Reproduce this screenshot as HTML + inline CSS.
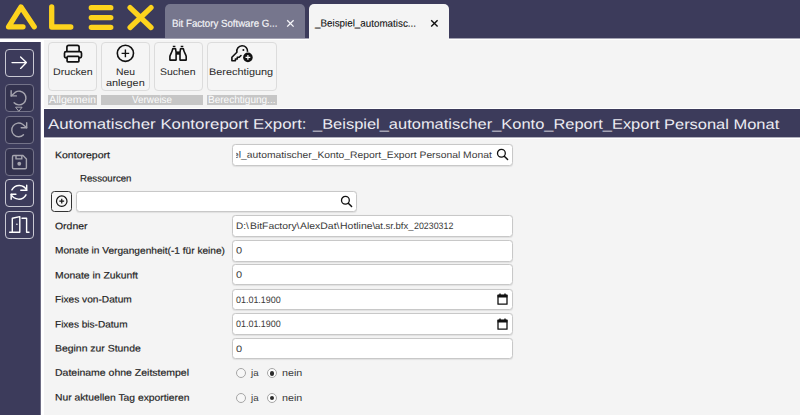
<!DOCTYPE html>
<html lang="de">
<head>
<meta charset="utf-8">
<title>ALEX - Automatischer Kontoreport Export</title>
<style>
*{box-sizing:border-box;margin:0;padding:0}
html,body{width:800px;height:415px;overflow:hidden;background:#fff}
body{position:relative;font-family:"Liberation Sans",sans-serif;color:#222;font-size:10px}
.abs{position:absolute}
.t{position:absolute;white-space:nowrap;line-height:1;transform-origin:0 0}
#hdr{left:0;top:0;width:800px;height:38px;background:#3c3b5b}
#hdr2{left:0;top:38px;width:800px;height:1px;background:#a5a4b4}
#side{left:0;top:42px;width:40px;height:373px;background:#3c3b5b}
#main{left:44px;top:40px;width:756px;height:375px;background:#f4f4f4}
.tab{position:absolute;top:4px;height:34px;border-radius:5px 5px 0 0}
#tab1{left:165px;width:140px;background:#76768d}
#tab2{left:309px;width:140px;background:#f4f4f4}
#tab2b{left:309px;top:38px;width:140px;height:2px;background:#f4f4f4}
.sb{position:absolute;left:5px;width:29px;height:28px;border:1px solid #c9c9d3;border-radius:4px}
.sb.dis{border-color:#747389;background:#33324e}
.sb svg{position:absolute;left:-1px;top:-1px}
.tb{position:absolute;top:42px;height:48.5px;border:1px solid #dcdcdc;border-radius:4px;background:#f5f5f5}
.grp{position:absolute;top:95px;height:9.5px;background:#c6c6c6;overflow:hidden}
.grp span{transform-origin:0 0;position:absolute;top:-0.8px;color:#fcfcfc;font-size:10.4px;line-height:12px;white-space:nowrap}
#title{left:44px;top:108px;width:756px;height:31px;background:#b1b1bd;border-top:1px solid #fff;border-bottom:1px solid #fff}
#title i{position:absolute;left:0;top:0;width:100%;height:28px;background:#3c3b5b}
#side2{left:40px;top:42px;width:1px;height:373px;background:#6d6c84}
.lbl{transform-origin:0 0;position:absolute;left:55px;white-space:nowrap;line-height:12px;font-size:9.4px;color:#1f1f1f;-webkit-text-stroke:0.18px #1f1f1f}
.inp{position:absolute;left:232px;width:280.6px;height:21.5px;background:#fff;border:1px solid #c8c8c8;border-radius:3.5px;overflow:hidden;box-shadow:0 0.5px 1px rgba(0,0,0,0.08)}
.inp span{transform-origin:0 0;position:absolute;left:3px;top:4.2px;white-space:nowrap;line-height:12px;font-size:9.4px;color:#3a3a3a}
.rad{position:absolute;width:10px;height:10px;border-radius:50%;border:1px solid #a6a6a6;background:#f7f7f7}
.rad.on{background:#fdfdfd}
.rad.on::after{content:"";position:absolute;left:1.75px;top:1.75px;width:4.5px;height:4.5px;border-radius:50%;background:#2b2b2b}
.rl{transform-origin:0 0;position:absolute;white-space:nowrap;line-height:12px;font-size:9.4px;color:#383838}
/*FIT*/
#t_tab1{transform:translateY(0.80px) rotate(0.03deg) scaleX(0.9586)}
#t_tab2{transform:translateY(0.60px) rotate(0.03deg) scaleX(0.9731)}
#t_b1{transform:translateY(0.00px) rotate(0.03deg) scaleX(1.1194)}
#t_b2a{transform:translateY(0.00px) rotate(0.03deg) scaleX(1.0896)}
#t_b2b{transform:translateY(0.00px) rotate(0.03deg) scaleX(1.1445)}
#t_b3{transform:translateY(0.00px) rotate(0.03deg) scaleX(1.1013)}
#t_b4{transform:translateY(0.00px) rotate(0.03deg) scaleX(1.1450)}
#t_g1{transform:translateY(0.00px) rotate(0.03deg) scaleX(1.0298)}
#t_g2{transform:translateY(0.00px) rotate(0.03deg) scaleX(0.9485)}
#t_g3{transform:translateY(0.00px) rotate(0.03deg) scaleX(0.9656)}
#t_title{transform:translateY(0.70px) rotate(0.03deg) scaleX(1.2036)}
#t_title2{transform:translateY(0.70px) rotate(0.03deg) scaleX(1.1746)}
#l1{transform:translateY(0.30px) rotate(0.03deg) scaleX(1.1224)}
#l2{transform:translateY(-0.50px) rotate(0.03deg) scaleX(1.0294)}
#l3{transform:translateY(0.30px) rotate(0.03deg) scaleX(1.1135)}
#l4{transform:translateY(0.60px) rotate(0.03deg) scaleX(1.0801)}
#l5{transform:translateY(0.40px) rotate(0.03deg) scaleX(1.1060)}
#l6{transform:translateY(0.50px) rotate(0.03deg) scaleX(1.0831)}
#l7{transform:translateY(0.40px) rotate(0.03deg) scaleX(1.0704)}
#l8{transform:translateY(-0.50px) rotate(0.03deg) scaleX(1.1116)}
#l9{transform:translateY(-0.20px) rotate(0.03deg) scaleX(1.1180)}
#l10{transform:translateY(-0.40px) rotate(0.03deg) scaleX(1.0998)}
#i1{transform:translateY(0.00px) rotate(0.03deg) scaleX(1.1008)}
#i3a{transform:translateY(0.00px) rotate(0.03deg) scaleX(1.0639)}
#i3b{transform:translateY(0.00px) rotate(0.03deg) scaleX(1.1046)}
#i3c{transform:translateY(0.00px) rotate(0.03deg) scaleX(1.1146)}
#i3d{transform:translateY(0.00px) rotate(0.03deg) scaleX(1.1165)}
#i3e{transform:translateY(0.00px) rotate(0.03deg) scaleX(1.0106)}
#i3f{transform:translateY(0.00px) rotate(0.03deg) scaleX(0.9420)}
#i4{transform:translateY(-0.40px) rotate(0.03deg) scaleX(1.1689)}
#i5{transform:translateY(-0.20px) rotate(0.03deg) scaleX(1.1689)}
#i6{transform:translateY(0.00px) rotate(0.03deg) scaleX(0.9537)}
#i7{transform:translateY(0.00px) rotate(0.03deg) scaleX(0.9537)}
#i8{transform:translateY(0.00px) rotate(0.03deg) scaleX(1.1689)}
#r1{transform:translateY(0.00px) rotate(0.03deg) scaleX(1.0278)}
#r2{transform:translateY(0.00px) rotate(0.03deg) scaleX(1.1419)}
#r3{transform:translateY(0.00px) rotate(0.03deg) scaleX(1.0278)}
#r4{transform:translateY(0.00px) rotate(0.03deg) scaleX(1.1419)}
/*ENDFIT*/
</style>
</head>
<body>
<div id="hdr" class="abs">
  <svg class="abs" style="left:0;top:0" width="165" height="38" viewBox="0 0 165 38">
    <g fill="none" stroke="#fdd31d" stroke-width="5.3" stroke-linecap="round" stroke-linejoin="round">
      <path d="M23 26.8 L8.5 26.8 L21 7 L34.2 26.8"/>
      <path d="M51.7 7 L51.7 27 L70.8 27"/>
      <path d="M91.3 7.7 H110.8 M91.3 17.6 H110.8 M91.3 27.3 H110.8"/>
      <path d="M130.1 7.6 L151 27.5 M151 7.6 L130.1 27.5"/>
    </g>
  </svg>
  <div id="tab1" class="tab"></div>
  <div id="tab2" class="tab"></div>
  <span class="t" id="t_tab1" style="left:171.5px;top:18px;font-size:10.1px;color:#f6f6fa;-webkit-text-stroke:0.15px #f6f6fa">Bit Factory Software G...</span>
  <span class="t" id="t_tab2" style="left:315px;top:18px;font-size:10.1px;color:#111;-webkit-text-stroke:0.1px #111">_Beispiel_automatisc...</span>
  <svg class="abs" style="left:286px;top:19px" width="9" height="9" viewBox="0 0 9 9"><path d="M1.2 1.2 L7.6 7.6 M7.6 1.2 L1.2 7.6" stroke="#f6f6fa" stroke-width="1.3" fill="none"/></svg>
  <svg class="abs" style="left:430px;top:19px" width="9" height="9" viewBox="0 0 9 9"><path d="M1.2 1.2 L7.6 7.6 M7.6 1.2 L1.2 7.6" stroke="#111" stroke-width="1.4" fill="none"/></svg>
</div>

<div id="hdr2" class="abs"></div>
<div id="tab2b" class="abs"></div>
<div id="side" class="abs"></div>
<div id="side2" class="abs"></div>
<div id="main" class="abs"></div>

<!-- sidebar buttons -->
<div class="sb" style="top:49px">
  <svg width="29" height="28" viewBox="0 0 29 28"><path d="M7 13.6 H21.3 M15.6 7.9 L21.4 13.6 L15.6 19.4" fill="none" stroke="#fff" stroke-width="1.35" stroke-linecap="round" stroke-linejoin="round"/></svg>
</div>
<div class="sb dis" style="top:84px">
  <svg width="29" height="28" viewBox="0 0 29 28" style="overflow:visible"><g fill="none" stroke="#a6a5af" stroke-width="1.4" stroke-linecap="round" stroke-linejoin="round"><path d="M6.15 6.7 V11.9 H11.4"/><path d="M9.1 18.7 A6.85 6.85 0 1 0 10.1 8.4 L6.15 11.9"/><path d="M11 23.2 H17.1 L14.05 27 Z" stroke-width="1"/></g></svg>
</div>
<div class="sb dis" style="top:116px">
  <svg width="29" height="28" viewBox="0 0 29 28"><g fill="none" stroke="#a6a5af" stroke-width="1.4" stroke-linecap="round" stroke-linejoin="round"><path d="M21.7 6.7 V11.8 H16.2"/><path d="M18.5 18.7 A6.85 6.85 0 1 1 17.6 8.3 L21.7 11.8"/></g></svg>
</div>
<div class="sb dis" style="top:147.5px">
  <svg width="29" height="28" viewBox="0 0 29 28"><g fill="none" stroke="#a6a5af" stroke-width="1.4" stroke-linejoin="round"><path d="M8.7 7.5 H18 L21.4 10.9 V19.5 Q21.4 20.7 20.2 20.7 H8.7 Q7.5 20.7 7.5 19.5 V8.7 Q7.5 7.5 8.7 7.5 Z"/><path d="M11 7.5 V10.9 H16.8 V7.5"/><circle cx="14.25" cy="15.75" r="1.9" fill="#a6a5af" stroke="none"/></g></svg>
</div>
<div class="sb" style="top:179px">
  <svg width="29" height="28" viewBox="0 0 29 28"><g fill="none" stroke="#fff" stroke-width="1.45" stroke-linecap="round" stroke-linejoin="round"><path d="M6.9 10.9 A8.3 8.3 0 0 1 21.7 11.3"/><path d="M21.7 6.3 V11.3 H15.8"/><path d="M21 15.8 A8.3 8.3 0 0 1 6.15 15.3"/><path d="M6.15 20.2 V15.3 H10.9"/></g></svg>
</div>
<div class="sb" style="top:210.5px">
  <svg width="29" height="28" viewBox="0 0 29 28"><g fill="none" stroke="#fff" stroke-width="1.4" stroke-linecap="round" stroke-linejoin="round"><path d="M4.6 21.2 H14.8 V5.6 L7.3 7.3 V21.2"/><path d="M17 7.3 H21.6 V21.2 H24"/><circle cx="11.9" cy="13.2" r="0.8" fill="#fff" stroke="none"/></g></svg>
</div>

<!-- toolbar -->
<div class="tb" style="left:48px;width:49px"></div>
<div class="tb" style="left:101px;width:49px"></div>
<div class="tb" style="left:154px;width:49px"></div>
<div class="tb" style="left:207px;width:70px"></div>

<svg class="abs" style="left:62px;top:43px" width="22" height="21" viewBox="0 0 22 21"><g fill="none" stroke="#111" stroke-width="1.7" stroke-linejoin="round"><path d="M4.9 8.4 V4.2 Q4.9 2.4 6.7 2.4 H15.3 Q17.1 2.4 17.1 4.2 V8.4"/><rect x="2.5" y="8.6" width="17" height="6.2" rx="1.6"/><rect x="5.1" y="13.4" width="11.8" height="5.4" rx="0.8" fill="#f5f5f5"/></g></svg>
<svg class="abs" style="left:115px;top:43px" width="22" height="21" viewBox="0 0 22 21"><g fill="none" stroke="#111"><circle cx="10.4" cy="10.3" r="8.1" stroke-width="1.6"/><path d="M6.6 10.4 H14.2 M10.4 6.6 V14.2" stroke-width="1.4"/></g></svg>
<svg class="abs" style="left:167px;top:43px" width="22" height="21" viewBox="0 0 22 21"><g fill="none" stroke="#111" stroke-width="1.6" stroke-linejoin="round"><path d="M5.7 5.8 H8.6 L9.1 9.5 V17.1 H2.9 V13.6 C2.9 12 5.2 9.5 5.7 5.8 Z"/><path d="M16.4 5.8 H13.5 L13 9.5 V17.1 H19.2 V13.6 C19.2 12 16.9 9.5 16.4 5.8 Z"/><path d="M5.8 3.6 H8.4 M13.7 3.6 H16.3" stroke-width="1.5"/></g><rect x="9.1" y="8.4" width="3.9" height="3.3" fill="#111"/></svg>
<svg class="abs" style="left:229px;top:43px" width="26" height="21" viewBox="0 0 26 21"><g fill="none" stroke="#111" stroke-width="1.6" stroke-linejoin="round" stroke-linecap="round"><path d="M18.55 8.8 A5.4 5.4 0 1 0 7.9 9.2 L2.9 14.2 V17.7 H6.4 V16 H8.3 V14.3 H10.2 L12 12.5"/></g><circle cx="14.4" cy="6.9" r="1" fill="#111"/><circle cx="18.9" cy="14.4" r="5.7" fill="#f5f5f5"/><circle cx="18.9" cy="14.4" r="4.8" fill="#111"/><path d="M16.5 14.4 H21.3 M18.9 12 V16.8" stroke="#fff" stroke-width="1.2"/></svg>

<span class="t" id="t_b1" style="left:52.9px;top:66.6px;font-size:9.5px;color:#2a2a2a">Drucken</span>
<span class="t" id="t_b2a" style="left:116px;top:66.6px;font-size:9.5px;color:#2a2a2a">Neu</span>
<span class="t" id="t_b2b" style="left:105.8px;top:77.6px;font-size:9.5px;color:#2a2a2a">anlegen</span>
<span class="t" id="t_b3" style="left:159.8px;top:66.6px;font-size:9.5px;color:#2a2a2a">Suchen</span>
<span class="t" id="t_b4" style="left:209.2px;top:66.6px;font-size:9.5px;color:#2a2a2a">Berechtigung</span>

<div class="grp" style="left:48.3px;width:48.9px"><span id="t_g1" style="left:0.5px">Allgemein</span></div>
<div class="grp" style="left:101px;width:101.6px"><span id="t_g2" style="left:31px">Verweise</span></div>
<div class="grp" style="left:206.8px;width:70px"><span id="t_g3" style="left:1px">Berechtigung...</span></div>

<div id="title" class="abs"><i></i></div>
<span class="t" id="t_title" style="left:48px;top:116.4px;font-size:14px;color:#ececf2">Automatischer Kontoreport Export:</span>
<span class="t" id="t_title2" style="left:312.5px;top:116.4px;font-size:14px;color:#ececf2">_Beispiel_automatischer_Konto_Report_Export Personal Monat</span>

<!-- form -->
<span class="lbl" id="l1" style="top:149.1px">Kontoreport</span>
<span class="lbl" id="l2" style="top:172.7px;left:79.5px">Ressourcen</span>
<span class="lbl" id="l3" style="top:219.6px">Ordner</span>
<span class="lbl" id="l4" style="top:244.1px">Monate in Vergangenheit(-1 für keine)</span>
<span class="lbl" id="l5" style="top:268.6px">Monate in Zukunft</span>
<span class="lbl" id="l6" style="top:293.2px">Fixes von-Datum</span>
<span class="lbl" id="l7" style="top:317.6px">Fixes bis-Datum</span>
<span class="lbl" id="l8" style="top:342.85px">Beginn zur Stunde</span>
<span class="lbl" id="l9" style="top:367.1px">Dateiname ohne Zeitstempel</span>
<span class="lbl" id="l10" style="top:391.6px">Nur aktuellen Tag exportieren</span>

<div class="inp" style="top:144px"><div class="abs" style="left:2.6px;top:0;right:0;bottom:0;overflow:hidden"><span id="i1" style="left:auto;right:19.6px;transform-origin:100% 0">_Beispiel_automatischer_Konto_Report_Export Personal Monat</span></div></div>
<svg class="abs" style="left:496px;top:148.2px" width="13" height="13" viewBox="0 0 13 13"><circle cx="5.4" cy="5.2" r="3.9" fill="none" stroke="#111" stroke-width="1.3"/><path d="M8.3 8.2 L11.6 11.5" stroke="#111" stroke-width="1.5" stroke-linecap="round"/></svg>

<div class="abs" style="left:51px;top:190.5px;width:21px;height:21px;border:1px solid #333;border-radius:3.5px;background:#f7f7f7"></div>
<svg class="abs" style="left:51px;top:190.5px" width="21" height="21" viewBox="0 0 21 21"><circle cx="10.75" cy="10.2" r="5.25" fill="none" stroke="#111" stroke-width="1.2"/><path d="M8.35 10.2 H13.15 M10.75 7.8 V12.6" stroke="#111" stroke-width="1.2"/></svg>
<div class="inp" style="left:76px;top:190.5px;width:281px;height:21.3px"></div>
<svg class="abs" style="left:339.5px;top:194.8px" width="13" height="13" viewBox="0 0 13 13"><circle cx="5.4" cy="5.2" r="3.9" fill="none" stroke="#111" stroke-width="1.3"/><path d="M8.3 8.2 L11.6 11.5" stroke="#111" stroke-width="1.5" stroke-linecap="round"/></svg>

<div class="inp" style="top:215px"><span id="i3a" style="left:3.25px">D:\</span><span id="i3b" style="left:16.50px">BitFactory\</span><span id="i3c" style="left:66.50px">AlexDat\</span><span id="i3d" style="left:106.50px">Hotline\</span><span id="i3e" style="left:142.30px">at.sr.bfx_</span><span id="i3f" style="left:181.20px">20230312</span></div>
<div class="inp" style="top:240px"><span id="i4">0</span></div>
<div class="inp" style="top:264px;height:21px"><span id="i5">0</span></div>
<div class="inp" style="top:288.5px"><span id="i6">01.01.1900</span></div>
<div class="inp" style="top:313px"><span id="i7">01.01.1900</span></div>
<div class="inp" style="top:337.5px"><span id="i8">0</span></div>

<svg class="abs" style="left:496px;top:292px" width="13" height="14" viewBox="0 0 13 14"><path d="M2 3.2 H11 V12.2 H2 Z" fill="#fff" stroke="#111" stroke-width="1.3" stroke-linejoin="round"/><path d="M1.6 4.2 H11.4" stroke="#111" stroke-width="2.6"/><path d="M4 1.4 V3.4 M9 1.4 V3.4" stroke="#111" stroke-width="1.4"/></svg>
<svg class="abs" style="left:496px;top:316.5px" width="13" height="14" viewBox="0 0 13 14"><path d="M2 3.2 H11 V12.2 H2 Z" fill="#fff" stroke="#111" stroke-width="1.3" stroke-linejoin="round"/><path d="M1.6 4.2 H11.4" stroke="#111" stroke-width="2.6"/><path d="M4 1.4 V3.4 M9 1.4 V3.4" stroke="#111" stroke-width="1.4"/></svg>

<div class="rad" style="left:236px;top:368.3px"></div>
<span class="rl" id="r1" style="left:250.5px;top:367px">ja</span>
<div class="rad on" style="left:267px;top:368.3px"></div>
<span class="rl" id="r2" style="left:281.8px;top:367px">nein</span>
<div class="rad" style="left:236px;top:392.8px"></div>
<span class="rl" id="r3" style="left:250.5px;top:391.5px">ja</span>
<div class="rad on" style="left:267px;top:392.8px"></div>
<span class="rl" id="r4" style="left:281.8px;top:391.5px">nein</span>
</body>
</html>
